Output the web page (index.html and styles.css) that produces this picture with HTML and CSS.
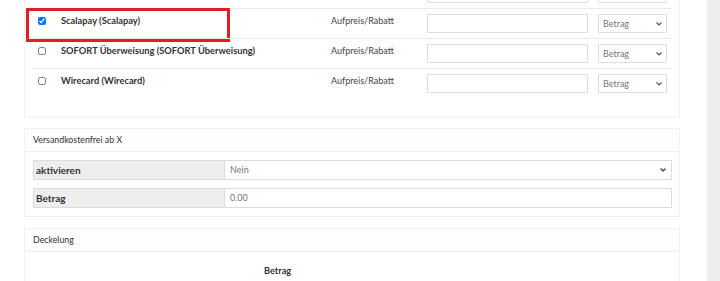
FILE: index.html
```html
<!DOCTYPE html>
<html lang="de">
<head>
    <meta charset="UTF-8">
    <title>Zahlungsarten</title>
    <link rel="stylesheet" href="styles.css">
</head>
<body>
    <div class="layout">
        <main class="content">

            <section class="card card-payments">
                <div class="pay-row">
                    <div></div>
                    <div></div>
                    <div></div>
                    <div><div class="input"></div></div>
                    <div><div class="select"></div></div>
                </div>
                <div class="pay-row">
                    <div><input type="checkbox" class="check" checked></div>
                    <div class="pay-name">Scalapay (Scalapay)</div>
                    <div class="pay-type">Aufpreis/Rabatt</div>
                    <div><div class="input"></div></div>
                    <div><div class="select"><span>Betrag</span><svg width="6" height="4" viewBox="0 0 6 4"><path d="M0.5 0.5 L3 3 L5.5 0.5" fill="none" stroke="#555" stroke-width="1.2"/></svg></div></div>
                    <div class="marker"></div>
                </div>
                <div class="pay-row">
                    <div><input type="checkbox" class="check"></div>
                    <div class="pay-name">SOFORT Überweisung (SOFORT Überweisung)</div>
                    <div class="pay-type">Aufpreis/Rabatt</div>
                    <div><div class="input"></div></div>
                    <div><div class="select"><span>Betrag</span><svg width="6" height="4" viewBox="0 0 6 4"><path d="M0.5 0.5 L3 3 L5.5 0.5" fill="none" stroke="#555" stroke-width="1.2"/></svg></div></div>
                </div>
                <div class="pay-row">
                    <div><input type="checkbox" class="check"></div>
                    <div class="pay-name">Wirecard (Wirecard)</div>
                    <div class="pay-type">Aufpreis/Rabatt</div>
                    <div><div class="input"></div></div>
                    <div><div class="select"><span>Betrag</span><svg width="6" height="4" viewBox="0 0 6 4"><path d="M0.5 0.5 L3 3 L5.5 0.5" fill="none" stroke="#555" stroke-width="1.2"/></svg></div></div>
                </div>
            </section>

            <section class="card">
                <div class="card-header">Versandkostenfrei ab X</div>
                <div class="card-body">
                    <div class="kv-row">
                        <div class="kv-label">aktivieren</div>
                        <div class="kv-value kv-select"><span>Nein</span><svg width="6" height="4" viewBox="0 0 6 4"><path d="M0.5 0.5 L3 3 L5.5 0.5" fill="none" stroke="#444" stroke-width="1.3"/></svg></div>
                    </div>
                    <div class="kv-row">
                        <div class="kv-label">Betrag</div>
                        <div class="kv-value">0.00</div>
                    </div>
                </div>
            </section>

            <section class="card">
                <div class="card-header">Deckelung</div>
                <div class="cap-body">
                    <div></div>
                    <div class="cap-head">Betrag</div>
                </div>
            </section>

        </main>
        <aside class="sidebar"></aside>
    </div>
</body>
</html>
```

FILE: styles.css
```css
html, body {
    margin: 0;
    height: 100%;
    overflow: hidden;
    background: #fff;
}
body {
    font-family: Lato, "Open Sans", sans-serif;
    font-size: 9px;
    line-height: 14px;
    color: #333;
}
.layout {
    display: flex;
    height: 100%;
}
.content {
    width: 656px;
    padding: 0 27px 0 24px;
    display: flex;
    flex-direction: column;
    gap: 11px;
}
.sidebar {
    flex: 1;
    background: #eeeeee;
}

/* Karten */
.card {
    border: 1px solid #f2f2f2;
    background: #fff;
}
.card-header {
    padding: 4px 8px;
    border-bottom: 1px solid #f0f0f0;
    background: #fdfdfd;
    color: #333;
    font-size: 8.8px;
}
.card-body {
    padding: 8px 7px 8px 8px;
    display: flex;
    flex-direction: column;
    gap: 8px;
}

/* Zahlungsarten */
.card-payments {
    margin-top: -23px;
    padding: 0 7px 18px 8px;
}
.pay-row {
    display: grid;
    grid-template-columns: 23px 270px 96px 171px 79px;
    padding: 5px 0;
    border-top: 1px solid #e9e9e9;
    position: relative;
}
.pay-row:first-child {
    border-top-color: transparent;
}
.pay-row > div {
    padding: 0 5px;
}
.check {
    width: 8px;
    height: 8px;
    margin: 3px 0 0 0;
    display: block;
}
.pay-name {
    font-weight: 700;
    font-size: 9.3px;
    color: #333;
}
.pay-type {
    color: #444;
}
.input {
    height: 17px;
    border: 1px solid #ddd;
    border-radius: 1px;
    background: #fff;
}
.select {
    height: 17px;
    border: 1px solid #ddd;
    border-radius: 1px;
    display: flex;
    align-items: center;
    justify-content: space-between;
    padding: 0 4px;
    color: #777;
}

/* Markierung */
.pay-row > .marker {
    position: absolute;
    left: -7px;
    top: -1px;
    width: 198px;
    height: 28px;
    padding: 0;
    border: 3px solid #e41d25;
}

/* Versandkostenfrei */
.kv-row {
    display: grid;
    grid-template-columns: 192px 1fr;
    height: 20px;
}
.kv-label {
    background: #eeeeee;
    border: 1px solid #dcdcdc;
    font-weight: 700;
    font-size: 10px;
    padding: 2px;
    color: #333;
}
.kv-value {
    border: 1px solid #dcdcdc;
    border-left: none;
    padding: 2px 5px;
    color: #777;
}
.kv-select {
    display: flex;
    justify-content: space-between;
    align-items: center;
}

/* Deckelung */
.cap-body {
    display: grid;
    grid-template-columns: 231px 1fr;
    padding: 12px 7px 8px 8px;
}
.cap-head {
    font-weight: 700;
    font-size: 9.2px;
    color: #333;
}
```
